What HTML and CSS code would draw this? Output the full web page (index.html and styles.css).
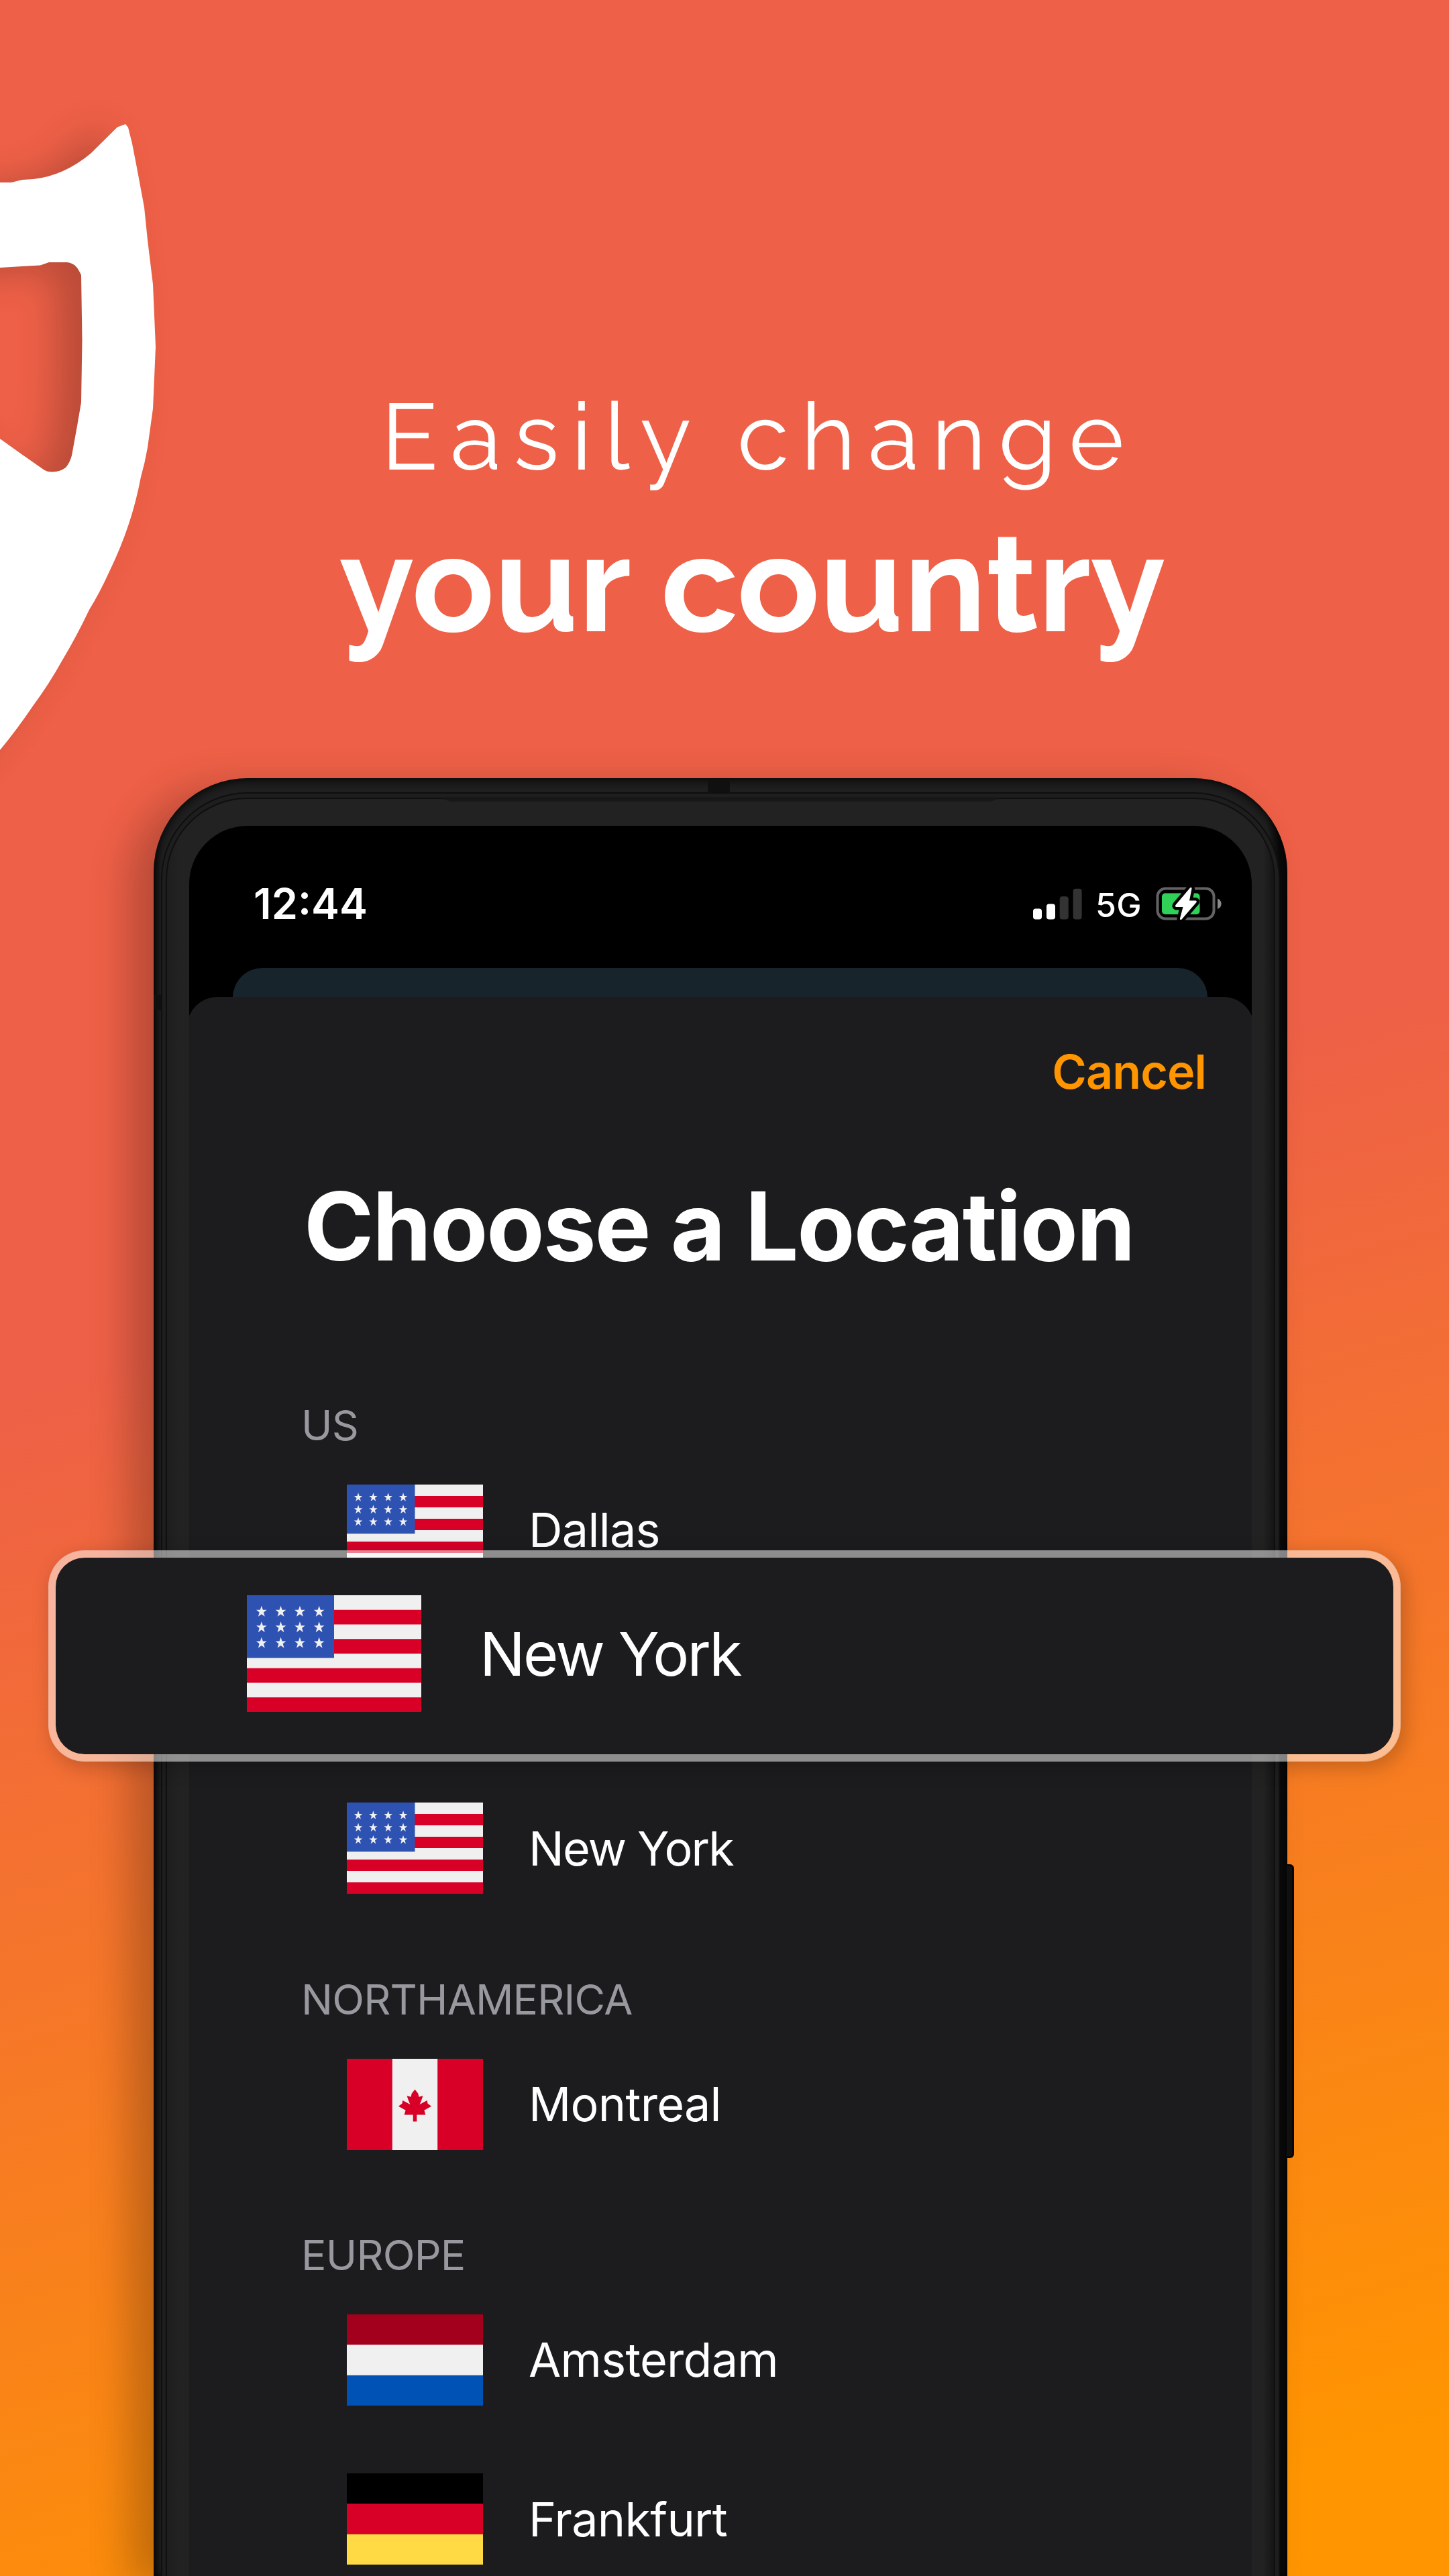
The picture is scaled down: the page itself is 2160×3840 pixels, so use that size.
FILE: index.html
```
<!DOCTYPE html>
<html lang="en">
<head>
<meta charset="utf-8">
<title>Choose a Location</title>
<link rel="stylesheet" href="styles.css">
</head>
<body>
<svg class="defs" aria-hidden="true">
  <defs>
    <path id="star" d="M0-17 4-5.300H15.500L6.200 2 9.700 14.500 0 7.300-9.700 14.500-6.200 2-15.500-5.300H-4Z"/>
    <symbol id="flag-us" viewBox="0 0 512 342" preserveAspectRatio="none">
      <path fill="#f0f0f0" d="M0 0h512v342H0z"/>
      <path fill="#d80027" d="M0 42.750h512v42.750H0zM0 128.250h512V171H0zM0 213.750h512v42.750H0zM0 299.250h512V342H0z"/>
      <path fill="#2e52b2" d="M0 0h256v184H0z"/>
      <g fill="#f0f0f0">
        <use href="#star" x="43" y="48"/><use href="#star" x="99.500" y="48"/><use href="#star" x="155.500" y="48"/><use href="#star" x="212" y="48"/>
        <use href="#star" x="43" y="94"/><use href="#star" x="99.500" y="94"/><use href="#star" x="155.500" y="94"/><use href="#star" x="212" y="94"/>
        <use href="#star" x="43" y="140"/><use href="#star" x="99.500" y="140"/><use href="#star" x="155.500" y="140"/><use href="#star" x="212" y="140"/>
      </g>
    </symbol>
    <symbol id="flag-ca" viewBox="0 0 512 342" preserveAspectRatio="none">
      <path fill="#f0f0f0" d="M0 0h512v342H0z"/>
      <path fill="#d80027" d="M0 0h171v342H0zM341 0h171v342H341z"/>
      <path fill="#d80027" d="M256 115 268 130 271 143 286 139 281 154 274 171 302 156 304 168 318 178 291 193 296 210H263V235H249V210H216L221 193 194 178 208 168 210 156 238 171 231 154 226 139 241 143 244 130Z"/>
    </symbol>
    <symbol id="flag-nl" viewBox="0 0 3 3" preserveAspectRatio="none">
      <path fill="#f0f0f0" d="M0 0h3v3H0z"/><path fill="#a2001d" d="M0 0h3v1H0z"/><path fill="#0052b4" d="M0 2h3v1H0z"/>
    </symbol>
    <symbol id="flag-de" viewBox="0 0 3 3" preserveAspectRatio="none">
      <path d="M0 0h3v1H0z"/><path fill="#d80027" d="M0 1h3v1H0z"/><path fill="#ffda44" d="M0 2h3v1H0z"/>
    </symbol>
  </defs>
</svg>

<main class="promo">
  <svg class="shield" viewBox="0 0 300 1200" aria-hidden="true">
    <path fill="#fff" fill-rule="evenodd" d="M-120 272H17L33 268 50 267Q95 262 135 229L175 189.500 187 185 191 190 197 214 204 250 215 309 220 358 228 424 232 517 228 609 220 667Q216 690 210 711 203 748 192 781 180 817 163 852 149 883 133 909 114 949 93 984 73 1020 50 1051 25 1088 0 1118L-120 1210ZM-120 401 0 399 33 397 60 395.500 73 391H100C112 392 117 401 121 410L122.500 507 121 600 115 635 107 679Q104 690 98 697 90 703 78 703.500 70 703.500 65 700L30 675.500 0 654-120 600Z"/>
  </svg>

  <header class="headline">
    <p class="headline__light">Easily change</p>
    <p class="headline__bold">your country</p>
  </header>

  <section class="phone">
    <span class="phone__antenna phone__antenna--top"></span>
    <span class="phone__antenna phone__antenna--left"></span>
    <span class="phone__button"></span>
    <div class="phone__rim">
      <div class="phone__bezel">
        <span class="phone__speaker"></span>
        <div class="screen">
          <div class="status">
            <span class="status__time">12:44</span>
            <svg class="status__signal" viewBox="0 0 73 49">
              <g fill="#fff"><rect y="31.500" width="13" height="16" rx="4"/><rect x="20" y="24.500" width="13" height="23" rx="4"/></g>
              <g fill="#333"><rect x="39.700" y="13.200" width="13" height="34.300" rx="4"/><rect x="59.600" y="1.700" width="13" height="45.800" rx="4"/></g>
            </svg>
            <span class="status__network">5G</span>
            <svg class="status__battery" viewBox="0 0 99 52">
              <rect x="2.500" y="3.500" width="84" height="45" rx="12" fill="none" stroke="#636363" stroke-width="4"/>
              <path fill="#8a8a8a" d="M92 18.500C99.500 21 99.500 31.500 92 34Z"/>
              <rect x="9" y="10.500" width="56.500" height="31.500" rx="5" fill="#30d158"/>
              <path fill="#fff" stroke="#000" stroke-width="9" stroke-linejoin="round" paint-order="stroke" d="M51 2.500Q53.500 .500 53.500 4L50 21.500H59.500Q61.500 22 60.500 24L38.500 49.500Q35.500 51 36 48L40.500 31H30Q28 30 29.500 28Z"/>
            </svg>
          </div>
          <div class="backdrop-card"></div>
          <div class="sheet">
            <a class="sheet__cancel">Cancel</a>
            <h1 class="sheet__title">Choose a Location</h1>
            <h2 class="group">US</h2>
            <ul class="rows">
              <li class="row"><svg class="flag"><use href="#flag-us"/></svg><span>Dallas</span></li>
              <li class="row row--spaced row--tight"><svg class="flag"><use href="#flag-us"/></svg><span>New York</span></li>
            </ul>
            <h2 class="group">NORTHAMERICA</h2>
            <ul class="rows">
              <li class="row"><svg class="flag"><use href="#flag-ca"/></svg><span>Montreal</span></li>
            </ul>
            <h2 class="group">EUROPE</h2>
            <ul class="rows">
              <li class="row"><svg class="flag"><use href="#flag-nl"/></svg><span>Amsterdam</span></li>
              <li class="row"><svg class="flag"><use href="#flag-de"/></svg><span>Frankfurt</span></li>
            </ul>
          </div>
        </div>
      </div>
    </div>
  </section>

  <div class="callout">
    <svg class="flag flag--large"><use href="#flag-us"/></svg>
    <span>New York</span>
  </div>
</main>
</body>
</html>
```
FILE: styles.css
```
* { box-sizing: border-box; margin: 0; padding: 0; }

body { font-family: Inter, "Liberation Sans", sans-serif; color: #fff; }

.defs { position: absolute; width: 0; height: 0; }

.promo {
  position: relative;
  width: 2160px;
  height: 3840px;
  overflow: hidden;
  background: linear-gradient(164deg, #ee6047 46.800%, #ff9500 95.100%);
}

.shield {
  position: absolute;
  left: 0;
  top: 0;
  width: 300px;
  height: 1200px;
  overflow: visible;
  filter: drop-shadow(-36px 10px 28px rgba(0, 0, 0, .22));
}

/* Headline */
.headline {
  position: relative;
  padding-top: 571px;
  height: 1160px;
  font-family: Raleway, Lato, sans-serif;
  white-space: nowrap;
}
.headline__light { padding-left: 568px; font-size: 140px; line-height: 160px; letter-spacing: 18.300px; }
.headline__bold { margin-top: 19px; padding-left: 506px; font-size: 203px; font-weight: 700; line-height: 240px; }

/* Phone body */
.phone {
  position: relative;
  width: 1690px;
  height: 2680px;
  margin-left: 229px;
  padding: 21px 11px 0;
  border-radius: 140px 140px 0 0;
  background: linear-gradient(90deg, #121212, #202020 12px, #202020 1660px, #0a0a0a 1679px);
  box-shadow: -36px 14px 60px rgba(0, 0, 0, .23), inset 0 2px 16px #000;
}
.phone__rim {
  height: 100%;
  padding: 6px 5px 0;
  border: 2px solid #0f0f0f;
  border-bottom: 0;
  border-radius: 129px 129px 0 0;
  background: #1e1e1e;
}
.phone__bezel {
  position: relative;
  height: 100%;
  padding: 40px 33px 0;
  border: 2px solid #0f0f0f;
  border-bottom: 0;
  border-radius: 122px 122px 0 0;
  background: linear-gradient(90deg, #1e1e1e, #222 18px, #222 1634px, #151515);
}
.phone__speaker {
  position: absolute;
  left: 407px;
  top: -1px;
  width: 836px;
  height: 5px;
  background: #181818;
  clip-path: polygon(0 0, 100% 0, 98% 100%, 2% 100%);
}
.phone__antenna { position: absolute; background: #101010; }
.phone__antenna--top { left: 826px; top: 1px; width: 33px; height: 20px; }
.phone__antenna--left { left: 0; top: 323px; width: 11px; height: 23px; }
.phone__button {
  position: absolute;
  left: 1689px;
  top: 1619px;
  width: 11px;
  height: 438px;
  border: solid #060606;
  border-width: 3px 3px 3px 0;
  border-radius: 0 6px 6px 0;
  background: #101010;
}
.screen {
  height: 100%;
  overflow: hidden;
  border-radius: 87px 87px 0 0;
  background: #000;
}

/* Status bar */
.status {
  display: flex;
  align-items: center;
  height: 212px;
  padding: 20px 44px 0 96px;
}
.status__time { margin-right: auto; font-size: 63px; font-weight: 600; }
.status__signal { width: 73px; height: 49px; }
.status__network { margin: 3px 21px 0 20px; font-size: 50px; font-weight: 500; letter-spacing: .300px; }
.status__battery { width: 99px; height: 52px; }

.backdrop-card {
  height: 60px;
  margin: 0 66px -17px 65px;
  border-radius: 44px 44px 0 0;
  background: #18242c;
}

/* Location sheet */
.sheet {
  position: relative;
  display: flex;
  flex-direction: column;
  height: 2354px;
  margin: 0 -4px;
  padding: 70px 4px 0;
  border-radius: 47px 47px 0 0;
  background: #1c1c1e;
}
.sheet__cancel {
  align-self: flex-end;
  margin-right: 68px;
  font-size: 70px;
  font-weight: 600;
  line-height: 84px;
  letter-spacing: -.900px;
  color: #ff9500;
}
.sheet__title {
  margin: 103px 0 105px 171px;
  font-size: 141px;
  font-weight: 700;
  line-height: 170px;
  letter-spacing: -2.100px;
  white-space: nowrap;
}
.group {
  display: flex;
  align-items: flex-end;
  flex: none;
  height: 144px;
  padding-left: 167px;
  font-size: 62.500px;
  font-weight: 400;
  line-height: 76px;
  letter-spacing: -.850px;
  color: #98989f;
}
.rows { list-style: none; }
.row {
  display: flex;
  align-items: center;
  gap: 68px;
  height: 237.300px;
  padding-left: 235px;
  font-size: 70px;
  letter-spacing: -.700px;
}
.row--spaced { margin-top: 237.300px; }
.row--tight { letter-spacing: -1.800px; }
.flag { display: block; flex: none; width: 203px; height: 136px; }

/* Enlarged row floating over the phone */
.callout {
  position: absolute;
  left: 72px;
  top: 2311px;
  display: flex;
  align-items: center;
  gap: 87px;
  width: 2016px;
  height: 315px;
  padding: 0 0 7px 285px;
  border: 11px solid rgba(255, 255, 255, .5);
  border-radius: 54px;
  background: #1c1c1e padding-box;
  box-shadow: 6px 8px 30px rgba(0, 0, 0, .22);
  font-size: 90px;
  letter-spacing: -2.700px;
}
.flag--large { width: 260px; height: 174px; }
```
